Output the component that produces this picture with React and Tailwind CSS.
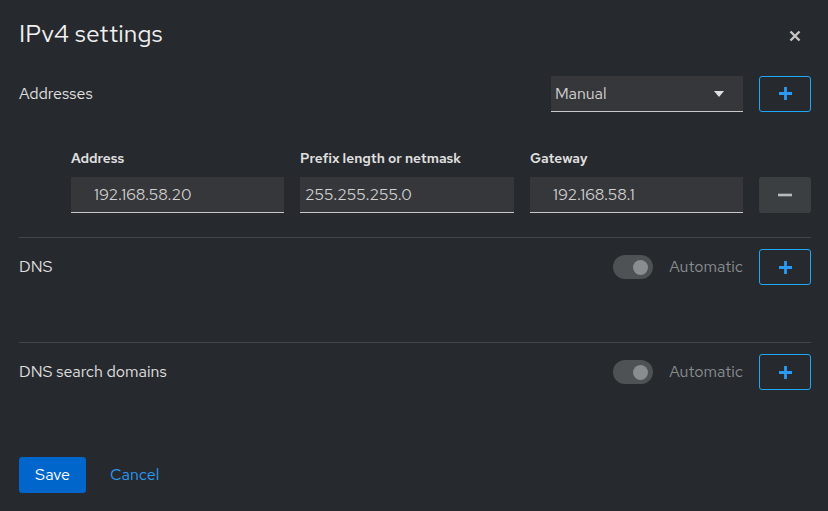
import { useState } from "react";

const font = { fontFamily: "'Red Hat Text', Inter, 'Noto Sans', sans-serif" };

function PlusButton() {
  return (
    <button className="w-[52px] h-[36px] border border-[#1fa7f8] rounded-[3px] flex items-center justify-center">
      <svg width="15" height="15" viewBox="0 0 15 15">
        <path d="M7.5 1v13M1 7.5h13" stroke="#2b9af3" strokeWidth="2.8" />
      </svg>
    </button>
  );
}

function Toggle() {
  return (
    <div className="w-[40px] h-[24px] rounded-full bg-[#4f5255] flex items-center justify-end pr-[5px]">
      <div className="w-[15px] h-[15px] rounded-full bg-[#8a8d90]" />
    </div>
  );
}

function Field({ label, value, pad }) {
  return (
    <div className="flex flex-col">
      <label className="text-[13.8px] font-semibold text-[#e0e0e0] h-[20px] leading-[20px] mb-[9px]">
        {label}
      </label>
      <div
        className={`h-[36px] bg-[#36373a] border-b border-[#c7c7c7] flex items-center pt-[1px] text-[16px] text-[#d2d2d2] ${pad}`}
      >
        {value}
      </div>
    </div>
  );
}

export default function App() {
  const [method] = useState("Manual");

  return (
    <div
      className="w-[828px] h-[511px] bg-[#26292d] text-[#e0e0e0] pl-[19px] pr-[17px] flex flex-col"
      style={font}
    >
      <div className="flex items-center justify-between h-[34px] mt-[17px]">
        <h1 className="text-[24.6px] font-normal text-[#f0f0f0]">IPv4 settings</h1>
        <svg width="12" height="12" viewBox="0 0 12 12" className="mr-[10px] mt-[4px]">
          <path d="M1.5 1.5l9 9M10.5 1.5l-9 9" stroke="#c7c7c7" strokeWidth="2.4" />
        </svg>
      </div>

      <div className="flex items-center mt-[24px] h-[36px] pt-[1px]">
        <span className="text-[16px] flex-1">Addresses</span>
        <div className="w-[192px] h-[36px] bg-[#36373a] border-b border-[#c7c7c7] flex items-center justify-between pl-[4px] pr-[19px] pt-[2px] text-[16px] text-[#d2d2d2]">
          {method}
          <svg width="10" height="6" viewBox="0 0 10 6">
            <path d="M0 0h10L5 6z" fill="#e0e0e0" />
          </svg>
        </div>
        <div className="ml-[16px]">
          <PlusButton />
        </div>
      </div>

      <div className="flex items-end mt-[37px] pl-[52px]">
        <div className="grid grid-cols-[213px_214px_213px] gap-x-[16px]">
          <Field label="Address" value="192.168.58.20" pad="pl-[23px]" />
          <Field label="Prefix length or netmask" value="255.255.255.0" pad="pl-[5px]" />
          <Field label="Gateway" value="192.168.58.1" pad="pl-[23px]" />
        </div>
        <button className="ml-[16px] w-[52px] h-[36px] bg-[#3c3f42] rounded-[3px] flex items-center justify-center">
          <svg width="14" height="4" viewBox="0 0 14 4">
            <path d="M0 2h14" stroke="#b8bbbe" strokeWidth="2.6" />
          </svg>
        </button>
      </div>

      <div className="border-t border-[#444548] mt-[24px]" />

      <div className="flex items-center mt-[11px] h-[36px]">
        <span className="text-[16px] flex-1">DNS</span>
        <Toggle />
        <span className="ml-[16px] text-[16px] text-[#8a8d90]">Automatic</span>
        <div className="ml-[16px]">
          <PlusButton />
        </div>
      </div>

      <div className="border-t border-[#444548] mt-[57px]" />

      <div className="flex items-center mt-[11px] h-[36px]">
        <span className="text-[16px] flex-1">DNS search domains</span>
        <Toggle />
        <span className="ml-[16px] text-[16px] text-[#8a8d90]">Automatic</span>
        <div className="ml-[16px]">
          <PlusButton />
        </div>
      </div>

      <div className="flex items-center mt-[67px] gap-[24px]">
        <button className="w-[67px] h-[36px] bg-[#0066cc] rounded-[3px] text-[16px] text-white">
          Save
        </button>
        <button className="text-[16px] text-[#2b9af3]">Cancel</button>
      </div>
    </div>
  );
}
